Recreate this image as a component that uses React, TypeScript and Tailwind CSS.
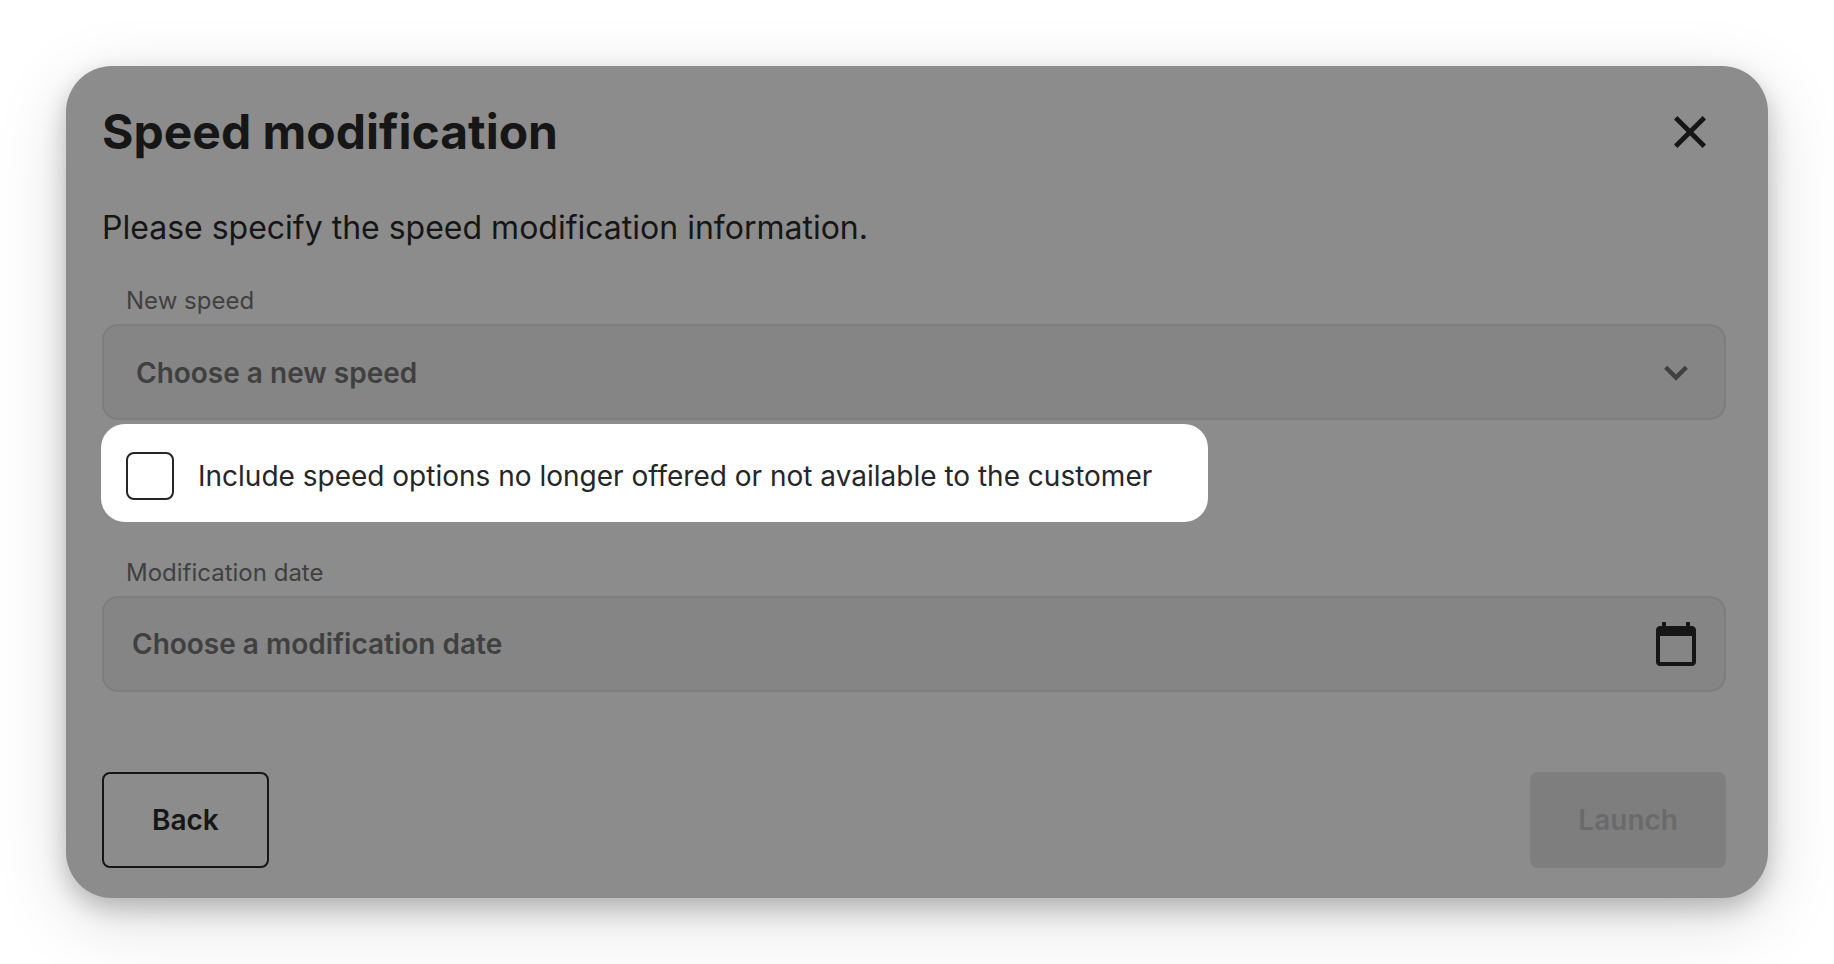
import { useState } from "react";
import { MdCalendarToday } from "react-icons/md";

const fieldClass =
  "block h-24 w-full appearance-none rounded-2xl border-2 border-[#7e7e7e] bg-[#858585] text-[28px] font-semibold text-[#404040]";

const labelClass = "mb-2 block px-6 text-2xl leading-[30px] text-[#404040]";

function CloseIcon() {
  return (
    <svg viewBox="0 0 48 48" className="h-12 w-12" fill="none" stroke="currentColor" strokeWidth="4.8" aria-hidden="true">
      <path d="M9.7 9.7 38.3 38.3M38.3 9.7 9.7 38.3" />
    </svg>
  );
}

function ChevronIcon() {
  return (
    <svg viewBox="0 0 48 48" className="h-12 w-12" fill="none" stroke="currentColor" strokeWidth="4.4" aria-hidden="true">
      <path d="M13.700 19.300 24 29.600l10.300-10.300" />
    </svg>
  );
}

export default function App() {
  const [speed, setSpeed] = useState("");
  const [date, setDate] = useState("");
  const [includeAll, setIncludeAll] = useState(false);

  return (
    <main className="min-h-screen bg-white p-[66px] font-['Inter',sans-serif] [font-optical-sizing:none]">
      <section
        role="dialog"
        aria-labelledby="dialog-title"
        className="rounded-[46px] bg-[#8c8c8c] pt-[34px] pr-[42px] pb-[30px] pl-9 text-[#161616] shadow-[0_10px_24px_rgba(0,0,0,0.22),0_20px_72px_rgba(0,0,0,0.15)]"
      >
        <header className="flex items-center justify-between pr-3">
          <h1 id="dialog-title" className="text-5xl leading-[64px] font-bold">
            Speed modification
          </h1>
          <button type="button" aria-label="Close">
            <CloseIcon />
          </button>
        </header>

        <form onSubmit={(e) => e.preventDefault()}>
          <p className="mt-10 mb-[34px] text-[32px] leading-[48px]">
            Please specify the speed modification information.
          </p>

          <label htmlFor="speed" className={labelClass}>
            New speed
          </label>
          <div className="relative">
            <select
              id="speed"
              value={speed}
              onChange={(e) => setSpeed(e.target.value)}
              className={`${fieldClass} pt-[2px] pr-24 pl-8`}
            >
              <option value="">Choose a new speed</option>
            </select>
            <span className="pointer-events-none absolute inset-y-0 right-[26px] flex items-center text-[#404040]">
              <ChevronIcon />
            </span>
          </div>

          {/* Highlighted option */}
          <label className="mt-1 -ml-px flex w-fit items-center gap-6 rounded-3xl bg-white pt-7 pr-14 pb-[22px] pl-[25px] text-[28px] text-[#262628]">
            <input
              type="checkbox"
              checked={includeAll}
              onChange={(e) => setIncludeAll(e.target.checked)}
              className="h-12 w-12 shrink-0 appearance-none rounded-lg border-2 border-[#262628] bg-white checked:bg-[#262628]"
            />
            <span className="leading-[48px]">
              Include speed options no longer offered or not available to the customer
            </span>
          </label>

          <label htmlFor="date" className={`${labelClass} mt-9`}>
            Modification date
          </label>
          <div className="relative">
            <input
              id="date"
              type="text"
              value={date}
              placeholder="Choose a modification date"
              onChange={(e) => setDate(e.target.value)}
              className={`${fieldClass} pr-24 pl-7 placeholder:text-[#404040]`}
            />
            <button
              type="button"
              aria-label="Open calendar"
              className="absolute inset-y-0 right-[26px] flex items-center"
            >
              <MdCalendarToday className="h-12 w-12" />
            </button>
          </div>

          <div className="mt-20 flex items-center justify-between text-[28px] font-semibold">
            <button type="button" className="h-24 rounded-lg border-2 border-[#161616] px-12">
              Back
            </button>
            <button type="submit" disabled className="h-24 rounded-lg bg-[#7e7e7e] px-12 text-[#6a6a6a]">
              Launch
            </button>
          </div>
        </form>
      </section>
    </main>
  );
}
